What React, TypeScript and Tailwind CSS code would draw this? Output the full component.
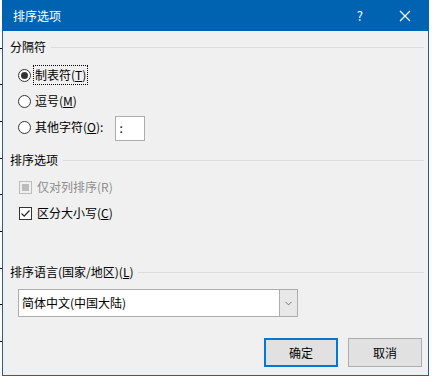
import { ChevronDown } from "lucide-react";

const font = { fontFamily: '"Noto Sans CJK SC", "Liberation Sans", sans-serif' };

function GroupHeader({ children, mt }: { children: React.ReactNode; mt: string }) {
  return (
    <div className={"flex items-center h-4 pl-[7px] pr-[4px] " + mt}>
      <span className="text-[12px] leading-4 text-black whitespace-nowrap">{children}</span>
      <div className="flex-1 h-px bg-[#dcdcdc] ml-[5px]" />
    </div>
  );
}

function Radio({ checked }: { checked?: boolean }) {
  return (
    <span className="w-[13px] h-[13px] rounded-full border border-[#333] bg-white flex items-center justify-center shrink-0">
      {checked && <span className="w-[7px] h-[7px] rounded-full bg-[#333]" />}
    </span>
  );
}

export default function App() {
  return (
    <div className="w-[432px] h-[379px] bg-white relative overflow-hidden" style={font}>
      <div className="absolute left-0 top-[30px] w-[2px] h-[330px] flex flex-col justify-around">
        {Array.from({ length: 9 }).map((_, i) => (
          <div key={i} className="w-[2px] h-px bg-black" />
        ))}
      </div>
      <div className="ml-[2px] w-[427px] h-[376px] bg-[#f0f0f0] border border-t-0 border-[#2b5d94] flex flex-col">
        <div className="h-[31px] bg-[#0063b1] flex items-center text-white shrink-0 -mx-px">
          <span className="ml-[11px] text-[12px] leading-4">排序选项</span>
          <span className="ml-auto text-[13px] leading-4 mr-[36px]">?</span>
          <svg width="12" height="12" viewBox="0 0 12 12" className="mr-[18px]">
            <path d="M1 1 L11 11 M11 1 L1 11" stroke="white" strokeWidth="1.2" />
          </svg>
        </div>

        <GroupHeader mt="mt-[8px]">分隔符</GroupHeader>

        <div className="mt-[7px] flex flex-col text-[12px] text-black">
          <div className="h-[26px] flex items-center pl-[15px]">
            <Radio checked />
            <span className="ml-[3px] px-[1px] leading-4 py-[1px] outline-1 outline-dotted outline-black">
              制表符(<u>T</u>)
            </span>
          </div>
          <div className="h-[26px] flex items-center pl-[15px]">
            <Radio />
            <span className="ml-[4px] leading-4">
              逗号(<u>M</u>)
            </span>
          </div>
          <div className="h-[26px] flex items-center pl-[15px]">
            <Radio />
            <span className="ml-[4px] leading-4">
              其他字符(<u>O</u>):
            </span>
            <div className="ml-[12px] mt-[2px] w-[30px] h-[25px] bg-white border border-[#adadad] flex items-center pl-[3px] text-[12px]">
              :
            </div>
          </div>
        </div>

        <GroupHeader mt="mt-[12px]">排序选项</GroupHeader>

        <div className="mt-[6px] flex flex-col text-[12px]">
          <div className="h-[26px] flex items-center pl-[16px]">
            <span className="w-[13px] h-[13px] border border-[#bcbcbc] bg-[#f0f0f0] flex items-center justify-center">
              <span className="w-[7px] h-[7px] bg-[#bcbcbc]" />
            </span>
            <span className="ml-[5px] leading-4 text-[#8d8d8d]">仅对列排序(R)</span>
          </div>
          <div className="h-[26px] flex items-center pl-[16px]">
            <span className="w-[13px] h-[13px] border border-[#333] bg-white flex items-center justify-center">
              <svg width="11" height="11" viewBox="0 0 11 11">
                <path d="M1.5 5.5 L4.2 8.2 L9.5 2.5" fill="none" stroke="#222" strokeWidth="1.2" />
              </svg>
            </span>
            <span className="ml-[5px] leading-4 text-black">
              区分大小写(<u>C</u>)
            </span>
          </div>
        </div>

        <GroupHeader mt="mt-[38px]">
          排序语言(国家/地区)(<u>L</u>)
        </GroupHeader>

        <div className="mt-[9px] ml-[15px] w-[280px] h-[28px] bg-white border border-[#adadad] flex items-center">
          <span className="ml-[3px] text-[12px] leading-4 text-black">简体中文(中国大陆)</span>
          <div className="ml-auto w-[18px] h-full bg-[#e8e8e8] border-l border-[#adadad] flex items-center justify-center">
            <ChevronDown size={11} strokeWidth={1.5} color="#444" />
          </div>
        </div>

        <div className="mt-[21px] flex justify-end gap-[10px] pr-[6px]">
          <button className="w-[74px] h-[29px] bg-[#e1e1e1] border-2 border-[#0078d7] text-[12px] text-black">
            确定
          </button>
          <button className="w-[74px] h-[29px] bg-[#e1e1e1] border border-[#adadad] text-[12px] text-black">
            取消
          </button>
        </div>
      </div>
    </div>
  );
}
